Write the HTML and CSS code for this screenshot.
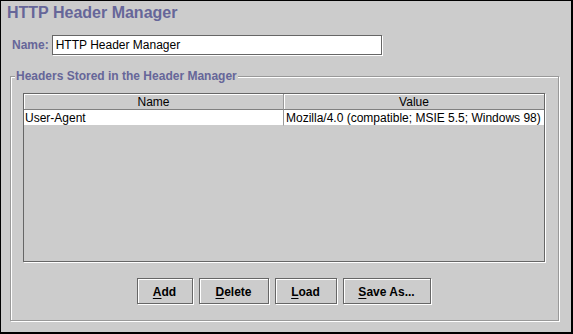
FILE: index.html
```html
<!DOCTYPE html>
<html lang="en">

<head>
    <meta charset="UTF-8">
    <title>HTTP Header Manager</title>
    <link rel="stylesheet" href="styles.css">
</head>

<body>

    <div class="frame">
        <h1 class="panel-title">HTTP Header Manager</h1>

        <div class="name-row">
            <label class="name-label" for="name">Name:</label>
            <input class="text-field" id="name" type="text" value="HTTP Header Manager">
        </div>

        <fieldset class="group">
            <legend class="group-title">Headers Stored in the Header Manager</legend>
            <div class="group-body">
                <div class="scroll-pane">
                    <table class="grid">
                        <thead>
                            <tr>
                                <th class="col-name">Name</th>
                                <th>Value</th>
                            </tr>
                        </thead>
                        <tbody>
                            <tr>
                                <td class="col-name">User-Agent</td>
                                <td>Mozilla/4.0 (compatible; MSIE 5.5; Windows 98)</td>
                            </tr>
                        </tbody>
                    </table>
                </div>

                <div class="button-row">
                    <button class="btn btn-add"><u>A</u>dd</button>
                    <button class="btn btn-delete"><u>D</u>elete</button>
                    <button class="btn btn-load"><u>L</u>oad</button>
                    <button class="btn btn-save"><u>S</u>ave As...</button>
                </div>
            </div>
        </fieldset>
    </div>

</body>

</html>
```

FILE: styles.css
```css
body {
    margin: 0;
    font-family: 'Liberation Sans', Arial, sans-serif;
    font-size: 12px;
    color: #000;
}

.frame {
    width: 573px;
    height: 334px;
    box-sizing: border-box;
    background-color: #cccccc;
    border-style: solid;
    border-color: #000;
    border-width: 1px 2px 2px 1px;
    overflow: hidden;
}

.panel-title {
    margin: 3px 0 0 6px;
    font-size: 16px;
    line-height: 18px;
    font-weight: 700;
    color: #666699;
}

.name-row {
    display: flex;
    align-items: center;
    margin: 13px 0 0 11px;
}

.name-label {
    font-weight: 700;
    color: #666699;
    margin-right: 3px;
}

.text-field {
    width: 330px;
    height: 20px;
    box-sizing: border-box;
    margin: 0;
    padding: 0 0 0 3px;
    font-family: inherit;
    font-size: 12px;
    color: #000;
    background-color: #fff;
    border: 1px solid #666666;
    box-shadow: 1px 1px 0 #fff;
    outline: none;
}

/* titled etched border */
.group {
    width: 549px;
    box-sizing: border-box;
    margin: 14px 0 0 9px;
    padding: 0;
    min-inline-size: 0;
    border: 1px solid #999999;
    box-shadow: inset 1px 1px 0 #fff, 1px 1px 0 #fff;
}

.group-title {
    margin-left: 4px;
    padding: 0 1px;
    line-height: 15px;
    font-weight: 700;
    color: #666699;
    background-color: #cccccc;
}

.group-body {
    padding: 9px 12px 16px 12px;
}

.scroll-pane {
    width: 522px;
    height: 169px;
    box-sizing: border-box;
    background-color: #cccccc;
    border: 1px solid #666666;
    box-shadow: 1px 1px 0 #fff;
}

.grid {
    width: 100%;
    border-collapse: separate;
    border-spacing: 0;
    table-layout: fixed;
}

.grid th {
    padding: 1px 0 0 0;
    line-height: 14px;
    font-weight: 400;
    text-align: center;
    background-color: #cccccc;
    border-bottom: 1px solid #808080;
    box-shadow: inset 1px 1px 0 #fff;
}

.grid td {
    padding: 1px 0 0 1px;
    line-height: 14px;
    white-space: nowrap;
    overflow: hidden;
    background-color: #fff;
    border-bottom: 1px solid #cccccc;
}

.grid .col-name {
    width: 259px;
    border-right: 1px solid #999999;
}

.grid td + td {
    padding-left: 2px;
}

.button-row {
    display: flex;
    justify-content: center;
    gap: 6px;
    margin-top: 16px;
    padding-right: 2px;
}

.btn {
    height: 26px;
    box-sizing: border-box;
    margin: 0;
    padding: 2px 0 0 0;
    font-family: inherit;
    font-size: 12px;
    font-weight: 700;
    color: #000;
    background-color: #cccccc;
    border: 1px solid #666666;
    box-shadow: inset 1px 1px 0 #fff, 1px 1px 0 #fff;
}

.btn u {
    text-underline-offset: 2px;
}

.btn-add {
    width: 56px;
}

.btn-delete {
    width: 70px;
}

.btn-load {
    width: 62px;
}

.btn-save {
    width: 88px;
}
```
